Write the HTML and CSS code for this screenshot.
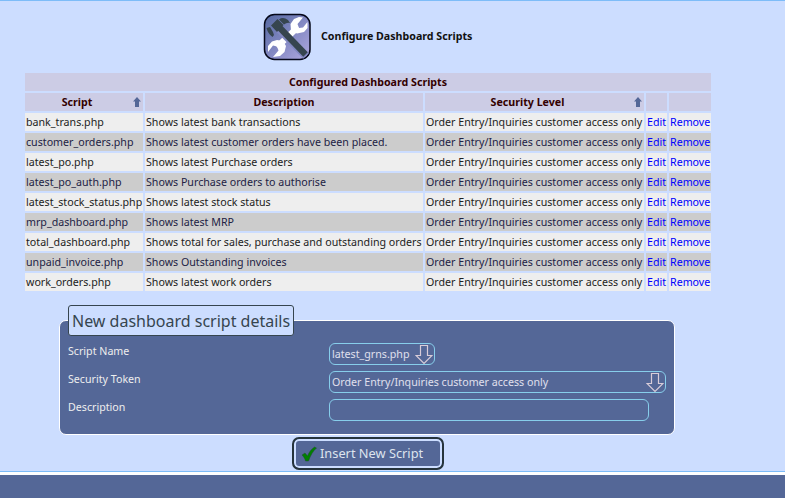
FILE: index.html
```
<!DOCTYPE html>
<html lang="en">
<head>
<meta charset="utf-8">
<title>Configure Dashboard Scripts</title>
<link rel="stylesheet" href="styles.css">
</head>
<body>
<main class="content">
  <header class="page-title">
    <svg class="title-icon" width="48" height="48" viewBox="0 0 48 48">
      <defs>
        <linearGradient id="bg" x1="0" y1="0" x2="1" y2="1">
          <stop offset="0" stop-color="#5468a0"/>
          <stop offset=".5" stop-color="#8288c2"/>
          <stop offset="1" stop-color="#b0a8e0"/>
        </linearGradient>
      </defs>
      <rect x="1.500" y="1.500" width="45.500" height="45" rx="10" fill="url(#bg)" stroke="#05081a" stroke-width="1.5"/>
      <path d="M14 34 35 14" stroke="#fff" stroke-width="6"/>
      <path d="M40 4.500 34.500 11 36 15 40 14.500 44.500 9 44.500 15 41 19 34 20.500 28 18 27.500 11 31 6 36 4Z" fill="#fff"/>
      <path d="M10 44 15.500 37.500 14 33.500 10 32.500 5 39 5 33 9 28.500 14 27 20 28 23 33 21.500 39 17 43Z" fill="#fff"/>
      <path d="M16 16 43 43" stroke="#8288c2" stroke-width="8"/>
      <path d="M16 14 42.500 41.500" stroke="#36454f" stroke-width="6.2"/>
      <path d="M8 12.500 14.500 6 20.500 12 14 19ZM16 6.500Q20 3.500 25 7L27 10Q24 9 21 11.500ZM3.500 15 7 14 10 19 11 22 9.500 24Q5 21 3.500 15Z" fill="#36454f"/>
    </svg>
    <h1>Configure Dashboard Scripts</h1>
  </header>

  <table class="scripts">
    <colgroup><col class="c-script"><col class="c-desc"><col class="c-sec"><col class="c-edit"><col class="c-remove"></colgroup>
    <thead>
      <tr><th colspan="5">Configured Dashboard Scripts</th></tr>
      <tr>
        <th class="sortable">Script<svg class="sort" width="8" height="10" viewBox="0 0 8 10"><path d="M4 0 8 4.5H6V10H2V4.5H0Z"/></svg></th>
        <th>Description</th>
        <th class="sortable">Security Level<svg class="sort" width="8" height="10" viewBox="0 0 8 10"><path d="M4 0 8 4.5H6V10H2V4.5H0Z"/></svg></th>
        <th></th><th></th>
      </tr>
    </thead>
    <tbody>
      <tr><td>bank_trans.php</td><td>Shows latest bank transactions</td><td>Order Entry/Inquiries customer access only</td><td><a href="#">Edit</a></td><td><a href="#">Remove</a></td></tr>
      <tr><td>customer_orders.php</td><td>Shows latest customer orders have been placed.</td><td>Order Entry/Inquiries customer access only</td><td><a href="#">Edit</a></td><td><a href="#">Remove</a></td></tr>
      <tr><td>latest_po.php</td><td>Shows latest Purchase orders</td><td>Order Entry/Inquiries customer access only</td><td><a href="#">Edit</a></td><td><a href="#">Remove</a></td></tr>
      <tr><td>latest_po_auth.php</td><td>Shows Purchase orders to authorise</td><td>Order Entry/Inquiries customer access only</td><td><a href="#">Edit</a></td><td><a href="#">Remove</a></td></tr>
      <tr><td>latest_stock_status.php</td><td>Shows latest stock status</td><td>Order Entry/Inquiries customer access only</td><td><a href="#">Edit</a></td><td><a href="#">Remove</a></td></tr>
      <tr><td>mrp_dashboard.php</td><td>Shows latest MRP</td><td>Order Entry/Inquiries customer access only</td><td><a href="#">Edit</a></td><td><a href="#">Remove</a></td></tr>
      <tr><td>total_dashboard.php</td><td>Shows total for sales, purchase and outstanding orders</td><td>Order Entry/Inquiries customer access only</td><td><a href="#">Edit</a></td><td><a href="#">Remove</a></td></tr>
      <tr><td>unpaid_invoice.php</td><td>Shows Outstanding invoices</td><td>Order Entry/Inquiries customer access only</td><td><a href="#">Edit</a></td><td><a href="#">Remove</a></td></tr>
      <tr><td>work_orders.php</td><td>Shows latest work orders</td><td>Order Entry/Inquiries customer access only</td><td><a href="#">Edit</a></td><td><a href="#">Remove</a></td></tr>
    </tbody>
  </table>

  <form>
    <section class="details">
      <h2 class="legend">New dashboard script details</h2>
      <div class="field">
        <span class="label">Script Name</span>
        <div class="control select name">latest_grns.php<svg class="arrow" width="18" height="21" viewBox="0 0 18 21"><path d="M5.5 1.5H12.5V11.5H17L9 19.5 1 11.5H5.5Z"/></svg></div>
      </div>
      <div class="field">
        <span class="label">Security Token</span>
        <div class="control select token">Order Entry/Inquiries customer access only<svg class="arrow" width="18" height="21" viewBox="0 0 18 21"><path d="M5.5 1.5H12.5V11.5H17L9 19.5 1 11.5H5.5Z"/></svg></div>
      </div>
      <div class="field">
        <span class="label">Description</span>
        <input class="control text" type="text" aria-label="Description">
      </div>
    </section>
    <button class="submit" type="button"><svg width="16" height="16" viewBox="0 0 16 16"><path d="M1 9 4 7 6.5 10C8 6 10.500 3 13.500 1L15.500 2C12 5 9.500 9.500 7.500 15H4.500C4 12.500 2.500 10.500 1 9Z"/></svg><span>Insert New Script</span></button>
  </form>
</main>
<footer class="footer"></footer>
</body>
</html>
```
FILE: styles.css
```
* { box-sizing: border-box; }
body {
  margin: 0;
  height: 498px;
  overflow: hidden;
  display: flex;
  flex-direction: column;
  background: #ccddff;
  font: 10.667px/16px "Noto Sans", sans-serif;
  color: #222;
}
.content {
  height: 472px;
  border-top: 1px solid #7dbcf8;
  border-bottom: 1px solid #7dbcf8;
}
.footer {
  flex: 1;
  border-top: 3px solid #fff;
  background: #546797;
}
.page-title {
  display: flex;
  align-items: center;
  gap: 10px;
  height: 48px;
  margin: 12px 0 0 263px;
}
.page-title h1 {
  margin: 0 0 2px;
  font-size: 10.667px;
  line-height: 16px;
  color: #111;
}
.scripts {
  width: 690px;
  margin: 10px 0 0 23px;
  table-layout: fixed;
  border-spacing: 2px;
}
.c-script { width: 118px; }
.c-desc { width: 278px; }
.c-sec { width: 219px; }
.c-edit { width: 21px; }
.c-remove { width: 42px; }
.scripts th, .scripts td {
  height: 18px;
  padding: 1px;
  line-height: 16px;
  white-space: nowrap;
}
.scripts th { background: #cccce5; color: #330000; }
.scripts td { background: #eee; }
.scripts tbody tr:nth-child(even) td { background: #ccc; color: #222244; }
.scripts a { color: #00f; text-decoration: none; }
.scripts th.sortable { position: relative; padding-right: 15px; }
.sort { position: absolute; right: 2px; top: 4px; fill: #546797; }
.details {
  width: 616px;
  height: 115px;
  margin: 27px 0 0 59px;
  padding-left: 8px;
  border: 1px solid #fff;
  border-radius: 7px;
  background: #546797;
  color: #eee;
}
.legend {
  width: 226px;
  height: 31px;
  margin: -16px 0 7px;
  padding-left: 3px;
  border: 1px solid #36454f;
  border-radius: 3px;
  background: #ccddff;
  color: #36454f;
  font-size: 16px;
  font-weight: 400;
  line-height: 31px;
  white-space: nowrap;
}
.field { display: flex; height: 28px; }
.label { width: 261px; }
.control {
  height: 22px;
  border: 1px solid #87ceeb;
  border-radius: 6px;
  background: #546797;
  color: #e0e0ee;
  line-height: 20px;
}
.select {
  display: flex;
  justify-content: space-between;
  padding: 0 1px 0 2px;
  white-space: nowrap;
}
.name { width: 106px; }
.token { width: 337px; }
.text { width: 320px; padding: 0 3px; }
.arrow { flex: none; fill: none; stroke: #d8ccd8; stroke-width: 1.2; }
.submit {
  display: flex;
  align-items: center;
  gap: 3px;
  width: 152px;
  height: 33px;
  margin: 2px 0 0 292px;
  padding: 0 0 0 7px;
  border: 2px solid #26343c;
  border-radius: 7px;
  box-shadow: inset 0 0 0 2px #ccddff;
  background: #546797;
  color: #dde4ee;
  font: 12.8px/18px "Noto Sans", sans-serif;
  white-space: nowrap;
}
.submit span { margin-bottom: 2px; }
.submit svg { fill: #008000; stroke: #234a35; stroke-width: .5; }
```
